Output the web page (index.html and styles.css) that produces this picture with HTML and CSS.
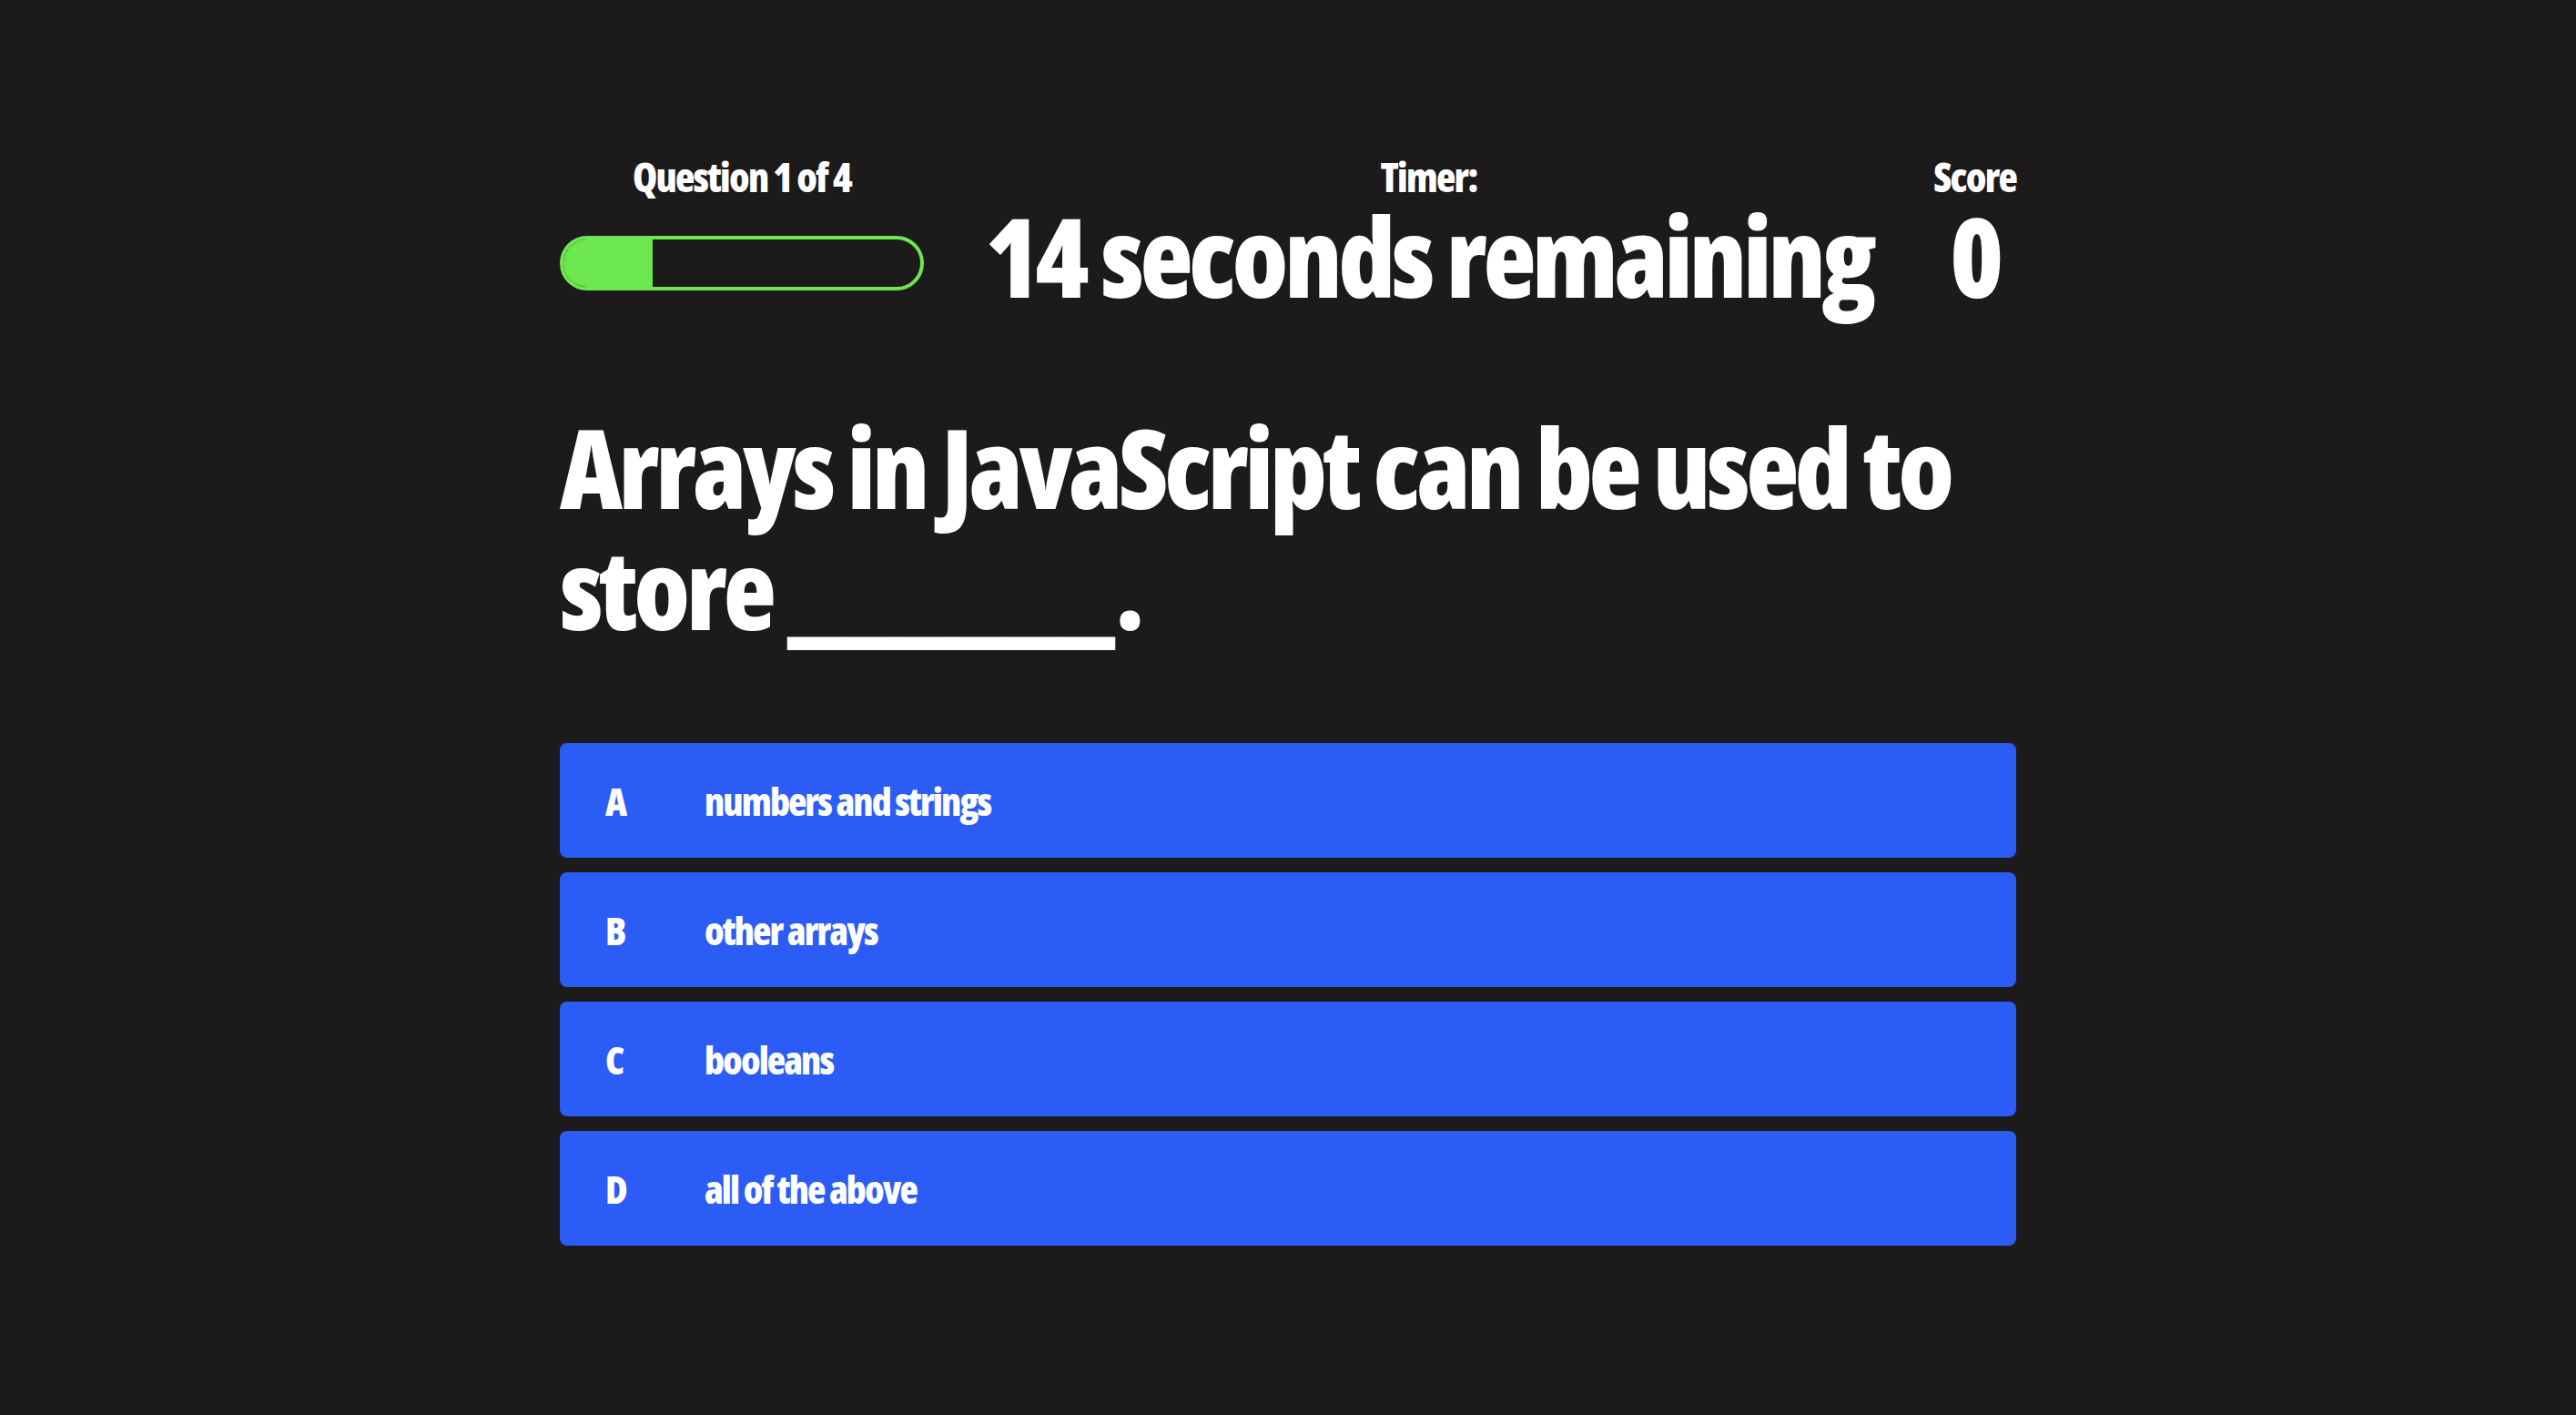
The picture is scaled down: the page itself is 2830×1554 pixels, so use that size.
FILE: index.html
```html
<!DOCTYPE html>
<html lang="en">
<head>
<meta charset="utf-8">
<title>Quiz</title>
<link rel="stylesheet" href="styles.css">
</head>
<body>
<main class="quiz">
  <header class="quiz-header">
    <div class="stat">
      <div class="stat-label">Question 1 of 4</div>
      <div class="stat-value">
        <div class="progress"><div class="progress-fill" style="width:25%"></div></div>
      </div>
    </div>
    <div class="stat">
      <div class="stat-label">Timer:</div>
      <div class="stat-value">14 seconds remaining</div>
    </div>
    <div class="stat">
      <div class="stat-label">Score</div>
      <div class="stat-value">0</div>
    </div>
  </header>
  <h1 class="question">Arrays in JavaScript can be used to store <span class="blank">______</span>.</h1>
  <ul class="choices">
    <li><button class="choice"><span class="choice-letter">A</span><span class="choice-text">numbers and strings</span></button></li>
    <li><button class="choice"><span class="choice-letter">B</span><span class="choice-text">other arrays</span></button></li>
    <li><button class="choice"><span class="choice-letter">C</span><span class="choice-text">booleans</span></button></li>
    <li><button class="choice"><span class="choice-letter">D</span><span class="choice-text">all of the above</span></button></li>
  </ul>
</main>
</body>
</html>
```
FILE: styles.css
```css
body {
  margin: 0;
  background: #1c1a1b;
  color: #ffffff;
  font-family: "Open Sans", "DejaVu Sans Condensed", sans-serif;
  font-stretch: 75%;
  font-weight: 800;
}

.quiz {
  width: 1600px;
  margin: 0 auto;
  padding-top: 172px;
}

.quiz-header {
  display: flex;
  justify-content: space-between;
}

.stat {
  display: flex;
  flex-direction: column;
  align-items: center;
  gap: 5px;
}

.stat-label {
  font-size: 44px;
  line-height: 44px;
  letter-spacing: -0.04em;
}

.stat-value {
  height: 120px;
  display: flex;
  align-items: center;
  font-size: 120px;
  line-height: 1;
  letter-spacing: -0.036em;
}

.progress {
  width: 400px;
  height: 60px;
  box-sizing: border-box;
  border: 4px solid #6ce74f;
  border-radius: 30px;
  overflow: hidden;
  margin-top: 15px;
}

.progress-fill {
  height: 100%;
  background: #6ce74f;
}

.question {
  margin: 105px 0 0;
  font-size: 120px;
  line-height: 133px;
  letter-spacing: -0.036em;
  font-weight: 800;
}

.blank {
  letter-spacing: 0;
}

.choices {
  list-style: none;
  margin: 104px 0 0;
  padding: 0;
  display: flex;
  flex-direction: column;
  gap: 16px;
}

.choice {
  width: 100%;
  height: 126px;
  display: flex;
  align-items: center;
  padding: 0 0 0 50px;
  border: 0;
  border-radius: 8px;
  background: #2b5df6;
  color: #ffffff;
  font-family: inherit;
  font-stretch: 75%;
  font-weight: 800;
  font-size: 42px;
  letter-spacing: -0.045em;
  text-align: left;
}

.choice-letter {
  width: 109px;
}
```
